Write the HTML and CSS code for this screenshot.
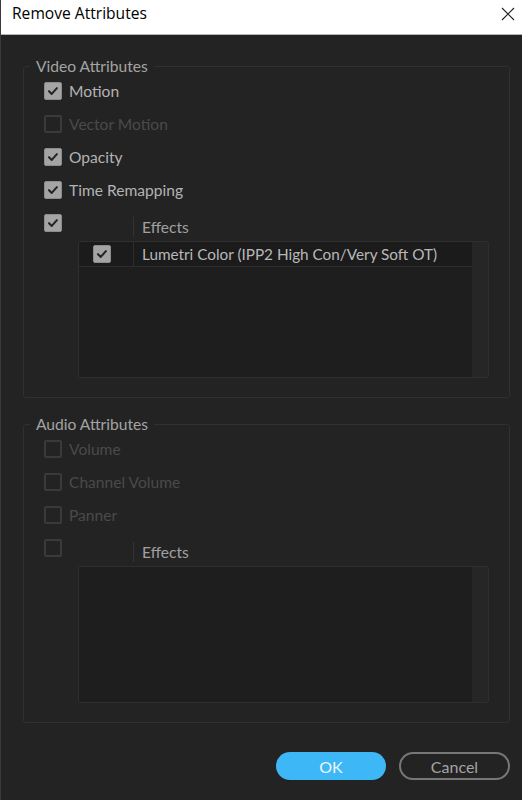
FILE: index.html
```html
<!DOCTYPE html>
<html>
<head>
<meta charset="utf-8">
<link rel="stylesheet" href="styles.css">
</head>
<body>
<div class="window">
  <div class="titlebar">
    <span class="title">Remove Attributes</span>
    <svg class="close" width="14" height="14" viewBox="0 0 14 14"><path d="M1 1 L13 13 M13 1 L1 13" stroke="#222" stroke-width="1.1" fill="none"/></svg>
  </div>
  <div class="dialog">
    <fieldset class="group">
      <legend>Video Attributes</legend>
      <div class="rows">
        <div class="row"><span class="cb on"><svg viewBox="0 0 18 18"><path d="M4.5 9.2 L7.6 12.3 L13.4 5.8"/></svg></span><span class="lbl">Motion</span></div>
        <div class="row"><span class="cb off"></span><span class="lbl dis">Vector Motion</span></div>
        <div class="row"><span class="cb on"><svg viewBox="0 0 18 18"><path d="M4.5 9.2 L7.6 12.3 L13.4 5.8"/></svg></span><span class="lbl">Opacity</span></div>
        <div class="row"><span class="cb on"><svg viewBox="0 0 18 18"><path d="M4.5 9.2 L7.6 12.3 L13.4 5.8"/></svg></span><span class="lbl">Time Remapping</span></div>
        <div class="effects">
          <div class="eff-check"><span class="cb on"><svg viewBox="0 0 18 18"><path d="M4.5 9.2 L7.6 12.3 L13.4 5.8"/></svg></span></div>
          <div class="table">
            <div class="thead"><div class="th-check"></div><div class="th-name">Effects</div></div>
            <div class="list">
              <div class="list-main">
                <div class="lrow">
                  <div class="cell-check"><span class="cb on"><svg viewBox="0 0 18 18"><path d="M4.5 9.2 L7.6 12.3 L13.4 5.8"/></svg></span></div>
                  <div class="cell-name">Lumetri Color (IPP2 High Con/Very Soft OT)</div>
                </div>
              </div>
              <div class="list-track"></div>
            </div>
          </div>
        </div>
      </div>
    </fieldset>

    <fieldset class="group audio">
      <legend>Audio Attributes</legend>
      <div class="rows">
        <div class="row"><span class="cb off"></span><span class="lbl dis">Volume</span></div>
        <div class="row"><span class="cb off"></span><span class="lbl dis">Channel Volume</span></div>
        <div class="row"><span class="cb off"></span><span class="lbl dis">Panner</span></div>
        <div class="effects">
          <div class="eff-check"><span class="cb off"></span></div>
          <div class="table">
            <div class="thead"><div class="th-check"></div><div class="th-name">Effects</div></div>
            <div class="list">
              <div class="list-main"></div>
              <div class="list-track"></div>
            </div>
          </div>
        </div>
      </div>
    </fieldset>

    <div class="buttons">
      <button class="btn ok">OK</button>
      <button class="btn cancel">Cancel</button>
    </div>
  </div>
</div>
</body>
</html>
```

FILE: styles.css
```css
* { box-sizing: border-box; }

body {
  margin: 0;
  background: #232323;
  font-family: Lato, "Noto Sans", sans-serif;
}

.window {
  border-left: 1px solid #3a3a3a;
  min-height: 800px;
}

.titlebar {
  height: 35px;
  background: #ffffff;
  border-bottom: 1px solid #b5b5b5;
  display: flex;
  justify-content: space-between;
  align-items: flex-start;
  padding: 3px 7px 0 11px;
  font-family: "Open Sans", "Noto Sans", sans-serif;
  font-size: 15.6px;
  line-height: 21px;
  color: #000;
}

.close {
  margin-top: 4px;
}

.dialog {
  padding: 21px 12px 0 22px;
}

.group {
  margin: 0;
  min-width: 0;
  border: 1px solid #303030;
  border-radius: 3px;
  padding: 0 20px 19px 6px;
}

.group.audio {
  margin-top: 16px;
}

legend {
  padding: 0 6px;
  font-size: 15.6px;
  line-height: 20px;
  color: #a3a3a3;
}

.rows {
  display: flex;
  flex-direction: column;
  gap: 15px;
  padding: 6px 0 0 14px;
}

.row {
  display: flex;
  align-items: center;
  height: 18px;
  gap: 7px;
}

.lbl {
  font-size: 15.6px;
  line-height: 18px;
  color: #b3b3b3;
}

.lbl.dis {
  color: #4a4a4a;
}

.cb {
  width: 18px;
  height: 18px;
  border-radius: 2px;
  flex: none;
  display: block;
}

.cb.on {
  background: #a4a4a4;
  border: 1px solid #8c8c8c;
}

.cb.on svg {
  display: block;
  width: 16px;
  height: 16px;
}

.cb.on path {
  fill: none;
  stroke: #242424;
  stroke-width: 2.3;
  stroke-linecap: round;
  stroke-linejoin: round;
}

.cb.off {
  border: 2px solid #3a3a3a;
}

.effects {
  display: flex;
}

.eff-check {
  width: 34px;
  flex: none;
}

.table {
  flex: 1;
}

.thead {
  display: flex;
  height: 27px;
}

.th-check {
  width: 55px;
  flex: none;
}

.th-name {
  border-left: 1px solid #333;
  margin: 3px 0 4px;
  padding-left: 8px;
  font-size: 15.6px;
  line-height: 20px;
  color: #a0a0a0;
}

.list {
  height: 137px;
  display: flex;
  border: 1px solid #2f2f2f;
  border-radius: 2px;
  background: #1e1e1e;
}

.list-main {
  flex: 1;
}

.list-track {
  width: 16px;
  background: #262626;
}

.lrow {
  display: flex;
  height: 25px;
  background: #1b1b1b;
  border-bottom: 1px solid #2c2c2c;
}

.cell-check {
  width: 54px;
  flex: none;
  padding-left: 14px;
  display: flex;
  align-items: center;
}

.cell-name {
  border-left: 1px solid #2c2c2c;
  padding-left: 8px;
  font-size: 15.3px;
  line-height: 24px;
  color: #b8b8b8;
  white-space: nowrap;
}

.buttons {
  display: flex;
  justify-content: flex-end;
  gap: 13px;
  margin-top: 29px;
}

.btn {
  height: 28px;
  border-radius: 14px;
  font-family: Lato, "Noto Sans", sans-serif;
  font-size: 16px;
  padding: 0;
}

.ok {
  width: 110px;
  background: #3db7f5;
  border: none;
  color: #eef8fe;
}

.cancel {
  width: 111px;
  background: transparent;
  border: 2px solid #777;
  color: #a3a3a3;
}
```
